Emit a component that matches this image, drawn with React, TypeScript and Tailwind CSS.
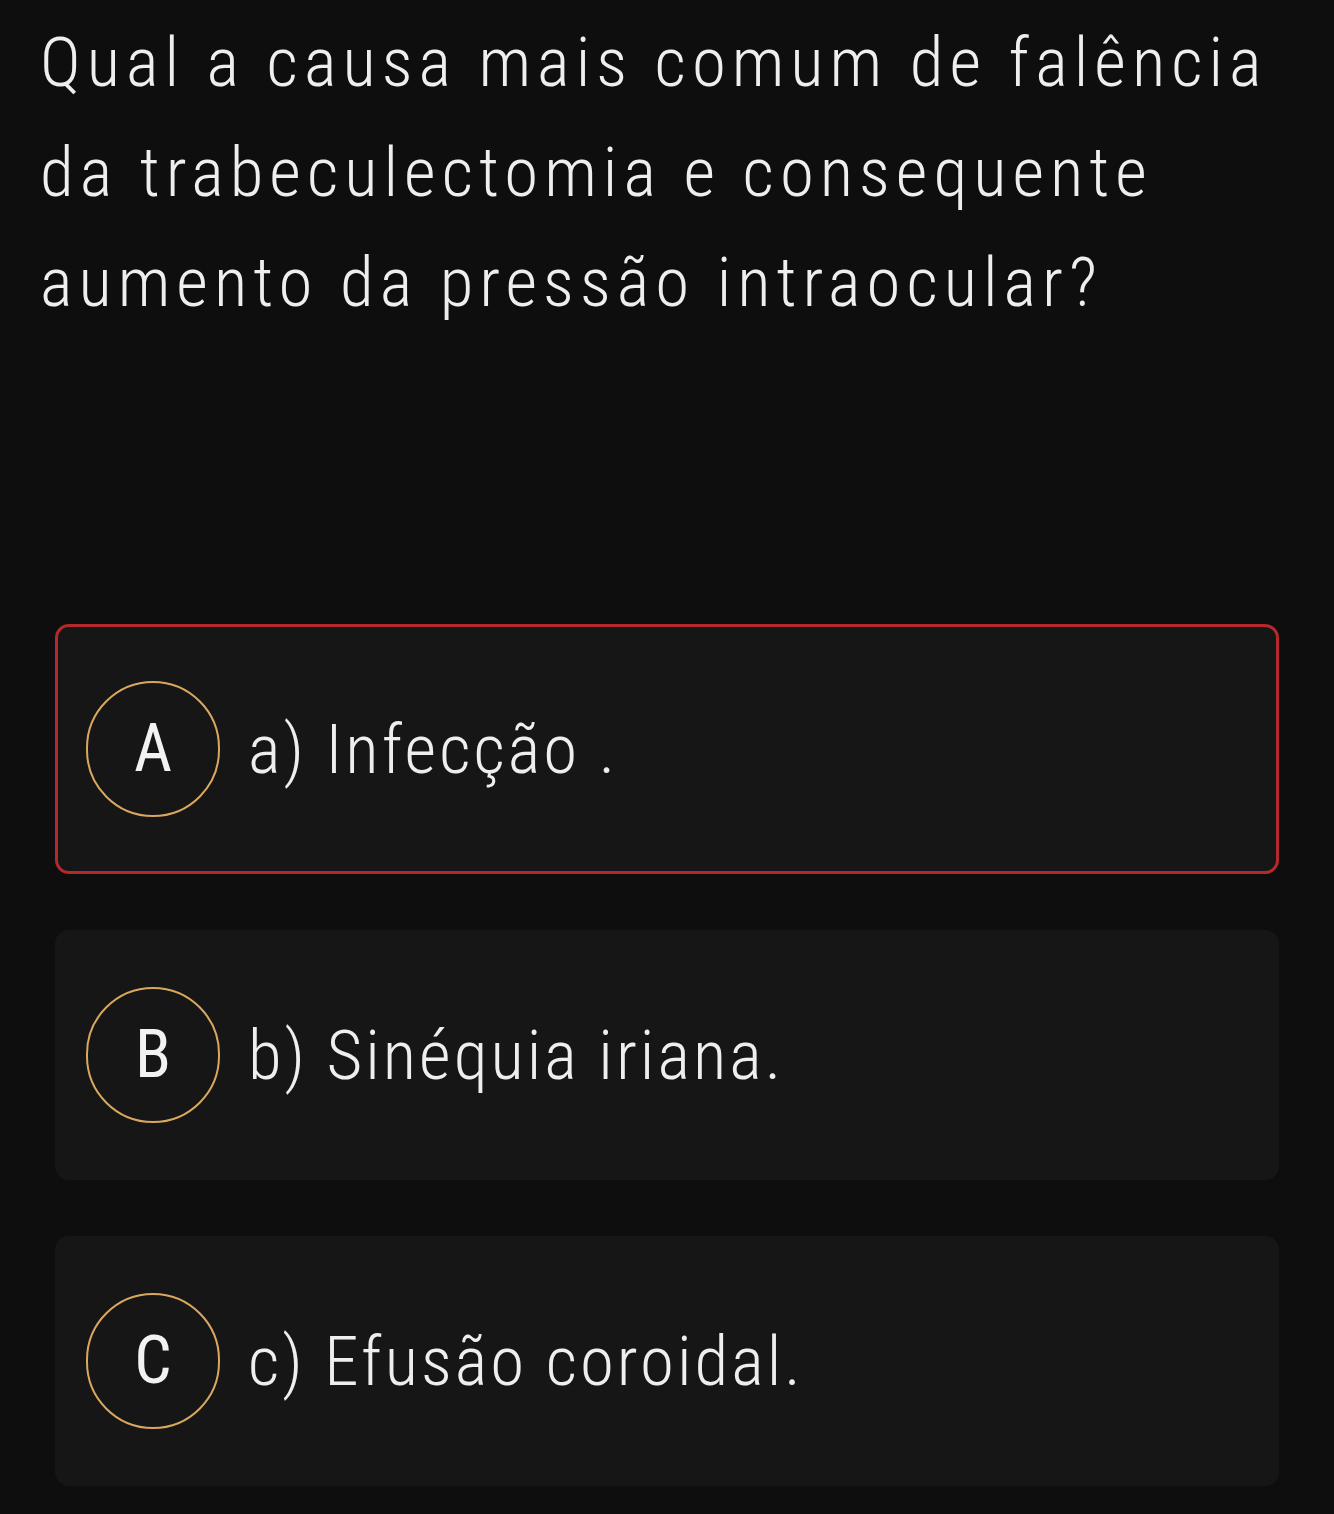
import React from 'react';

type Option = { letter: string; text: string; selected?: boolean };

const options: Option[] = [
  { letter: 'A', text: 'a) Infecção .', selected: true },
  { letter: 'B', text: 'b) Sinéquia iriana.' },
  { letter: 'C', text: 'c) Efusão coroidal.' },
];

const questionLines = [
  'Qual a causa mais comum de falência',
  'da trabeculectomia e consequente',
  'aumento da pressão intraocular?',
];

export default function App() {
  return (
    <div className="min-h-screen bg-[#0e0e0f] font-['Roboto',sans-serif] [font-stretch:condensed] text-[#eeeeee]">
      {/* Pergunta */}
      <div className="px-10 pt-2 text-[69px] font-light leading-[110px] tracking-[6px]">
        {questionLines.map((line) => (
          <div key={line} className="whitespace-nowrap">{line}</div>
        ))}
      </div>

      {/* Alternativas */}
      <div className="mt-[286px] flex flex-col gap-[56px] px-[55px] pb-[30px]">
        {options.map((opt) => (
          <div
            key={opt.letter}
            className={`flex h-[250px] items-center gap-[28px] rounded-[14px] border-[3px] bg-[#161616] pl-[28px] ${
              opt.selected ? 'border-[#b3292c]' : 'border-transparent'
            }`}
          >
            <div className="flex h-[136px] w-[134px] shrink-0 items-center justify-center rounded-full border-[2.5px] border-[#d9a85e]">
              <span className="text-[66px] font-normal leading-none text-[#f2f2f2]">{opt.letter}</span>
            </div>
            <span className="whitespace-nowrap text-[69px] font-light leading-none tracking-[3px]">
              {opt.text}
            </span>
          </div>
        ))}
      </div>
    </div>
  );
}
